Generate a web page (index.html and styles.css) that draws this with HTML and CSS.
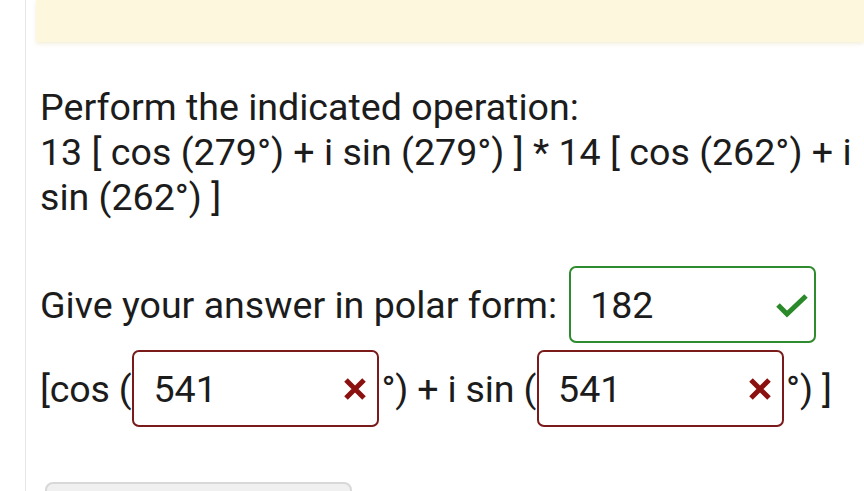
FILE: index.html
```html
<!DOCTYPE html>
<html lang="en">
<head>
    <meta charset="UTF-8">
    <meta name="viewport" content="width=device-width, initial-scale=1.0">
    <title>Polar Form Question</title>
    <link rel="stylesheet" href="styles.css">
</head>
<body>
<div class="page">
    <div class="notice"></div>
    <div class="question">
        <p class="prompt">Perform the indicated operation:<br>13 [ cos (279°) + i sin (279°) ] * 14 [ cos (262°) + i sin (262°) ]</p>

        <div class="answer-row">
            <span>Give your answer in polar form:</span>
            <span class="field correct">
                <span class="value">182</span>
                <svg class="mark" width="32" height="26" viewBox="0 0 32 26"><path d="M2 13 L11 22 L30 4" fill="none" stroke="#2a8a2a" stroke-width="5"/></svg>
            </span>
        </div>

        <div class="answer-row second">
            <span class="tight">[cos (</span>
            <span class="field wrong">
                <span class="value">541</span>
                <svg class="mark" width="22" height="22" viewBox="0 0 22 22"><path d="M2 2 L20 20 M20 2 L2 20" fill="none" stroke="#8b1010" stroke-width="5"/></svg>
            </span>
            <span class="tight">°) + i sin (</span>
            <span class="field wrong">
                <span class="value">541</span>
                <svg class="mark" width="22" height="22" viewBox="0 0 22 22"><path d="M2 2 L20 20 M20 2 L2 20" fill="none" stroke="#8b1010" stroke-width="5"/></svg>
            </span>
            <span class="tight">°) ]</span>
        </div>

        <button class="submit" type="button"></button>
    </div>
</div>
</body>
</html>
```

FILE: styles.css
```css
body {
    margin: 0;
    background: #fff;
    font-family: Roboto, "Noto Sans", sans-serif;
    color: #1c1c1c;
    overflow: hidden;
}
.page {
    margin-left: 25px;
    border-left: 1px solid #e6e6e6;
    padding-left: 10px;
    height: 491px;
    overflow: hidden;
}
.notice {
    height: 42px;
    background: #fdf8dd;
    box-shadow: 0 2px 4px rgba(220, 210, 160, 0.35);
}
.question {
    padding-left: 4px;
}
.prompt {
    font-size: 37.6px;
    line-height: 45px;
    margin: 43px 0 0 0;
}
.answer-row {
    display: flex;
    align-items: center;
    font-size: 37.6px;
    margin-top: 46px;
}
.answer-row.second {
    margin-top: 7px;
}
.tight {
    letter-spacing: -0.2px;
}
.field {
    display: flex;
    align-items: center;
    justify-content: space-between;
    width: 247px;
    height: 77px;
    box-sizing: border-box;
    border-radius: 7px;
    padding: 0 6px 0 19px;
}
.field.correct {
    border: 2px solid #2e8b2e;
    margin-left: 12px;
}
.field.wrong {
    border: 2px solid #7a1a1a;
    margin: 0 2px 0 1px;
    padding-right: 11px;
}
.submit {
    display: block;
    margin-top: 55px;
    margin-left: 5px;
    width: 307px;
    height: 40px;
    background: #f0f0f0;
    border: 2px solid #d8d8d8;
    border-radius: 8px;
}
```
